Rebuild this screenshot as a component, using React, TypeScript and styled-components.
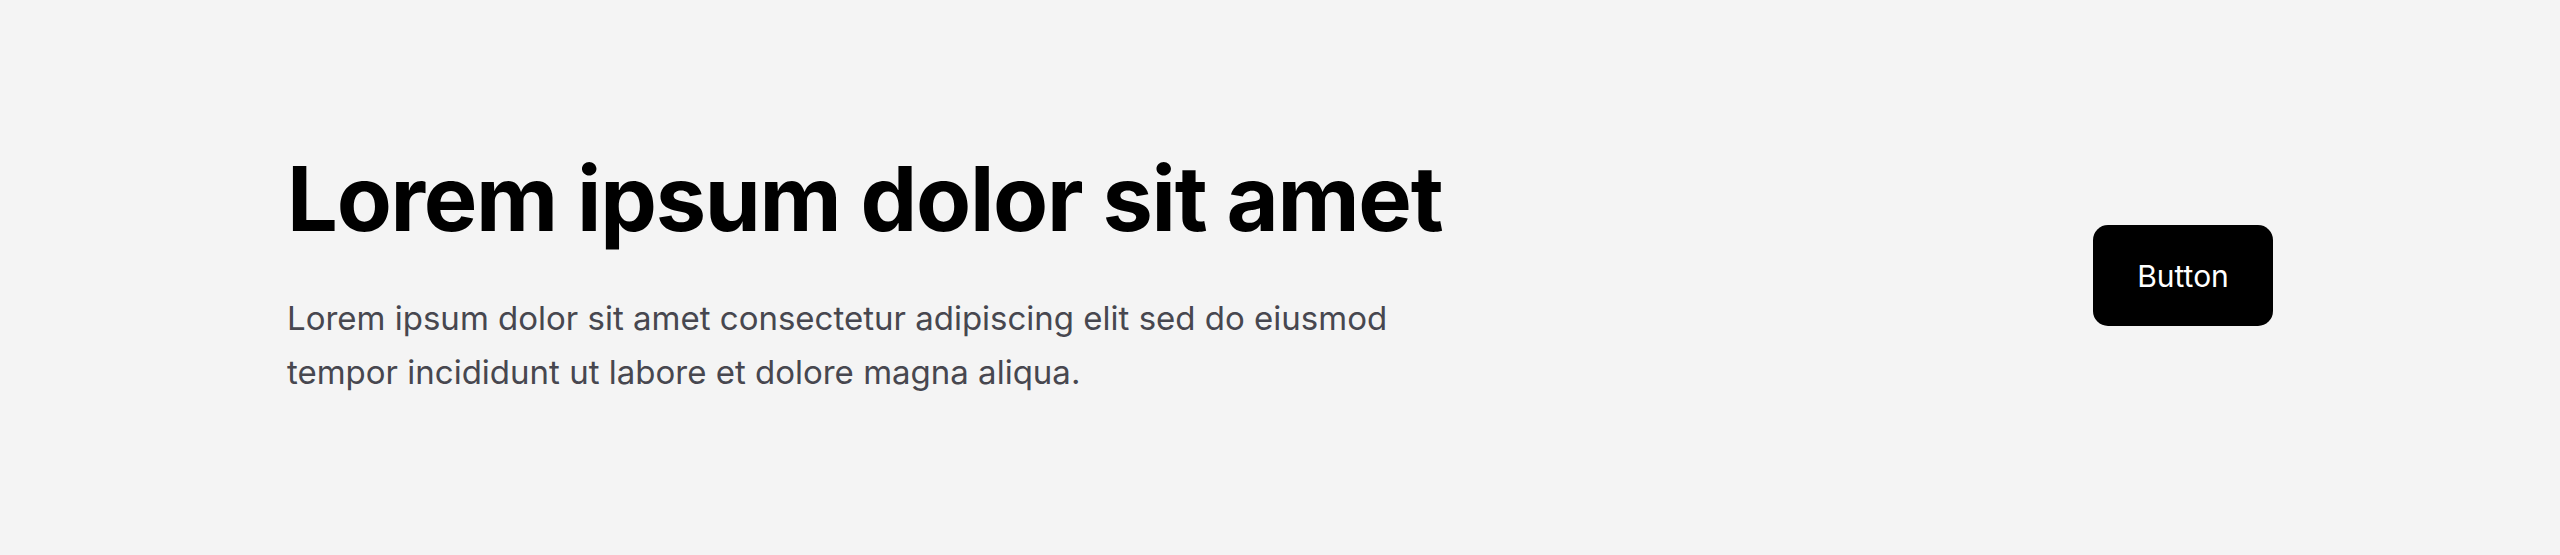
import React from "react";
import styled, { createGlobalStyle } from "styled-components";

const GlobalStyle = createGlobalStyle`
  html, body {
    margin: 0;
    padding: 0;
    background: #f4f4f4;
  }
  body {
    font-family: Inter, "Noto Sans", sans-serif;
  }
`;

const Page = styled.section`
  box-sizing: border-box;
  height: 555px;
  padding: 0 287px;
  display: flex;
  align-items: center;
  justify-content: space-between;
  background: #f4f4f4;
`;

const TextBlock = styled.div`
  display: flex;
  flex-direction: column;
  gap: 38px;
  padding-bottom: 12px;
`;

const Heading = styled.h1`
  margin: 0;
  font-family: Inter, sans-serif;
  font-weight: 700;
  font-size: 90px;
  line-height: 108px;
  letter-spacing: -0.014em;
  color: #000;
`;

const Lead = styled.p`
  margin: 0;
  max-width: 1140px;
  font-family: Inter, sans-serif;
  font-weight: 400;
  font-size: 33px;
  line-height: 54px;
  color: #47474f;
`;

const Button = styled.button`
  box-sizing: border-box;
  width: 180px;
  height: 101px;
  margin-bottom: 4px;
  border: none;
  border-radius: 15px;
  background: #000;
  color: #fff;
  font-family: Inter, sans-serif;
  font-size: 30px;
  font-weight: 400;
  cursor: pointer;
  flex-shrink: 0;
`;

export default function App() {
  return (
    <>
      <GlobalStyle />
      <Page>
        <TextBlock>
          <Heading>Lorem ipsum dolor sit amet</Heading>
          <Lead>
            Lorem ipsum dolor sit amet consectetur adipiscing elit sed do eiusmod
            tempor incididunt ut labore et dolore magna aliqua.
          </Lead>
        </TextBlock>
        <Button>Button</Button>
      </Page>
    </>
  );
}
